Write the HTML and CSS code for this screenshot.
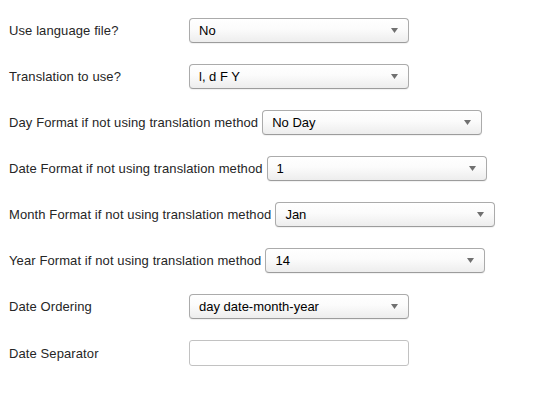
FILE: index.html
```html
<!DOCTYPE html>
<html>
<head>
<meta charset="utf-8">
<link rel="stylesheet" href="styles.css">
</head>
<body>
<form class="form">
  <div class="row">
    <label class="label">Use language file?</label>
    <span class="select-wrap">
      <select class="select"><option>No</option></select>
      <svg class="arrow" width="7" height="5" viewBox="0 0 7 5"><path d="M0 0H7L3.5 5Z" fill="#707070"/></svg>
    </span>
  </div>
  <div class="row">
    <label class="label">Translation to use?</label>
    <span class="select-wrap">
      <select class="select"><option>l, d F Y</option></select>
      <svg class="arrow" width="7" height="5" viewBox="0 0 7 5"><path d="M0 0H7L3.5 5Z" fill="#707070"/></svg>
    </span>
  </div>
  <div class="row">
    <label class="label">Day Format if not using translation method</label>
    <span class="select-wrap">
      <select class="select"><option>No Day</option></select>
      <svg class="arrow" width="7" height="5" viewBox="0 0 7 5"><path d="M0 0H7L3.5 5Z" fill="#707070"/></svg>
    </span>
  </div>
  <div class="row">
    <label class="label">Date Format if not using translation method</label>
    <span class="select-wrap">
      <select class="select"><option>1</option></select>
      <svg class="arrow" width="7" height="5" viewBox="0 0 7 5"><path d="M0 0H7L3.5 5Z" fill="#707070"/></svg>
    </span>
  </div>
  <div class="row">
    <label class="label">Month Format if not using translation method</label>
    <span class="select-wrap">
      <select class="select"><option>Jan</option></select>
      <svg class="arrow" width="7" height="5" viewBox="0 0 7 5"><path d="M0 0H7L3.5 5Z" fill="#707070"/></svg>
    </span>
  </div>
  <div class="row">
    <label class="label">Year Format if not using translation method</label>
    <span class="select-wrap">
      <select class="select"><option>14</option></select>
      <svg class="arrow" width="7" height="5" viewBox="0 0 7 5"><path d="M0 0H7L3.5 5Z" fill="#707070"/></svg>
    </span>
  </div>
  <div class="row">
    <label class="label">Date Ordering</label>
    <span class="select-wrap">
      <select class="select"><option>day date-month-year</option></select>
      <svg class="arrow" width="7" height="5" viewBox="0 0 7 5"><path d="M0 0H7L3.5 5Z" fill="#707070"/></svg>
    </span>
  </div>
  <div class="row">
    <label class="label">Date Separator</label>
    <input class="input" type="text" value="">
  </div>
</form>
</body>
</html>
```
FILE: styles.css
```css
html, body {
  background: #ffffff;
}
body {
  margin: 8px;
  font-family: "Liberation Sans", Arial, sans-serif;
  font-size: 13px;
  color: #262626;
}
.form {
  display: flex;
  flex-direction: column;
  gap: 21px;
  padding: 10px 0 0 1px;
}
.row {
  display: flex;
  align-items: center;
  gap: 4px;
  min-height: 25px;
}
.label {
  min-width: 176px;
  white-space: nowrap;
  letter-spacing: 0.1px;
}
.select-wrap {
  position: relative;
  display: block;
  width: 220px;
  height: 25px;
}
.select {
  -webkit-appearance: none;
  appearance: none;
  box-sizing: border-box;
  width: 220px;
  height: 25px;
  margin: 0;
  padding: 0 24px 0 9px;
  border: 1px solid #ababab;
  border-bottom-color: #9c9c9c;
  border-radius: 4px;
  background: linear-gradient(#ffffff 0%, #fbfbfb 45%, #ededed 100%);
  box-shadow: 0 1px 1px rgba(0, 0, 0, 0.06);
  font-family: "Liberation Sans", Arial, sans-serif;
  font-size: 13px;
  color: #000000;
  outline: none;
}
.arrow {
  position: absolute;
  right: 11px;
  top: 10px;
}
.input {
  box-sizing: border-box;
  width: 220px;
  height: 26px;
  margin: 0;
  padding: 0 8px;
  border: 1px solid #c2c2c2;
  border-radius: 3px;
  background: #ffffff;
  font-family: "Liberation Sans", Arial, sans-serif;
  font-size: 13px;
  outline: none;
}
```
